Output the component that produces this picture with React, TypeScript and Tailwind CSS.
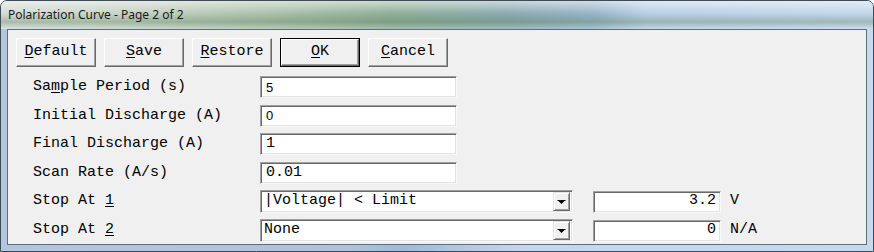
import React from 'react';

const mono = "font-['Liberation_Mono','Courier_New',monospace]";

function Btn({ label, hot, def }: { label: string; hot: number; def?: boolean }) {
  const face = (
    <div
      className={`${def ? 'w-[78px] h-[27px]' : 'w-[80px] h-[29px]'} flex items-center justify-center bg-[#f0f0f0] border-t border-l border-t-white border-l-white border-b border-r border-b-[#696969] border-r-[#696969] shadow-[inset_-1px_-1px_0_#a0a0a0] text-[15px] text-black ${mono}`}
    >
      <span>
        {label.slice(0, hot)}
        <span className="underline underline-offset-2">{label[hot]}</span>
        {label.slice(hot + 1)}
      </span>
    </div>
  );
  return def ? <div className="border border-black">{face}</div> : face;
}

function Sunken({ className, children }: { className: string; children?: React.ReactNode }) {
  return (
    <div
      className={`bg-white border-t border-l border-t-[#a0a0a0] border-l-[#a0a0a0] border-b border-r border-b-[#f8f8f8] border-r-[#f8f8f8] shadow-[inset_1px_1px_0_#696969,inset_-1px_-1px_0_#e3e3e3] flex items-center ${className}`}
    >
      {children}
    </div>
  );
}

function Combo({ value }: { value: React.ReactNode }) {
  return (
    <Sunken className="w-[313px] h-[23px] pl-[3px] pr-[2px]">
      <span className={`flex-1 text-[15px] ${mono}`}>{value}</span>
      <div className="w-[17px] h-[19px] flex items-center justify-center bg-[#f0f0f0] border-t border-l border-t-[#e3e3e3] border-l-[#e3e3e3] border-b border-r border-b-[#696969] border-r-[#696969] shadow-[inset_1px_1px_0_#fff,inset_-1px_-1px_0_#a0a0a0]">
        <svg width="9" height="6" viewBox="0 0 9 6">
          <path d="M1 1.5h7L4.5 5z" fill="#000" />
          <rect x="0.5" y="1" width="8" height="1" fill="#000" />
        </svg>
      </div>
    </Sunken>
  );
}

function Row({ label, children }: { label: React.ReactNode; children: React.ReactNode }) {
  return (
    <div className="flex items-center">
      <div className={`w-[227px] text-[15px] text-black ${mono}`}>{label}</div>
      {children}
    </div>
  );
}

export default function App() {
  const sans = "font-['Liberation_Sans',Arial,sans-serif] text-[13px]";
  return (
    <div className="w-[874px] h-[252px] flex flex-col overflow-hidden rounded-t-[7px] border border-[#3f4a57] bg-[linear-gradient(90deg,#b3c6dc_0%,#aec3db_40%,#9fbad6_46%,#c4d7ec_60%,#c6d9ed_100%)]">
      <div className="h-[28px] flex items-center pl-[7px] bg-[linear-gradient(180deg,rgba(255,255,255,0.55)_0%,rgba(255,255,255,0)_45%,rgba(90,130,90,0.35)_75%,rgba(255,255,255,0.2)_100%),linear-gradient(90deg,#d3dcd6_0%,#c5d2c4_15%,#a9bfa9_32%,#8fae97_45%,#8aaab0_58%,#96b5c9_68%,#b9cfe6_74%,#c3d6ec_100%)]">
        <span className="font-['Noto_Sans','Open_Sans',sans-serif] text-[12px] text-[#1a1a1a]">
          Polarization Curve - Page 2 of 2
        </span>
      </div>
      <div className="flex-1 mx-[6px] mb-[6px] border border-[#5e6e80] bg-[#f0f0f0] flex flex-col pt-[8px] pl-[8px]">
        <div className="flex gap-[8px]">
          <Btn label="Default" hot={0} />
          <Btn label="Save" hot={0} />
          <Btn label="Restore" hot={0} />
          <Btn label="OK" hot={0} def />
          <Btn label="Cancel" hot={0} />
        </div>
        <div className="flex flex-col gap-[6px] mt-[9px] pl-[17px]">
          <Row label={<>Sa<span className="underline underline-offset-2">m</span>ple Period (s)</>}>
            <Sunken className="w-[197px] h-[22px] pl-[5px]">
              <span className={sans}>5</span>
            </Sunken>
          </Row>
          <Row label="Initial Discharge (A)">
            <Sunken className="w-[197px] h-[22px] pl-[5px]">
              <span className={sans}>0</span>
            </Sunken>
          </Row>
          <Row label="Final Discharge (A)">
            <Sunken className="w-[197px] h-[22px] pl-[5px]">
              <span className={`text-[15px] ${mono}`}>1</span>
            </Sunken>
          </Row>
          <Row label="Scan Rate (A/s)">
            <Sunken className="w-[197px] h-[22px] pl-[5px]">
              <span className={`text-[15px] ${mono}`}>0.01</span>
            </Sunken>
          </Row>
          <Row label={<>Stop At <span className="underline underline-offset-2">1</span></>}>
            <Combo value="|Voltage| < Limit" />
            <Sunken className="w-[128px] h-[22px] ml-[20px] justify-end pr-[4px]">
              <span className={`text-[15px] ${mono}`}>3.2</span>
            </Sunken>
            <span className={`ml-[9px] text-[15px] ${mono}`}>V</span>
          </Row>
          <Row label={<>Stop At <span className="underline underline-offset-2">2</span></>}>
            <Combo value="None" />
            <Sunken className="w-[128px] h-[22px] ml-[20px] justify-end pr-[4px]">
              <span className={`text-[15px] ${mono}`}>0</span>
            </Sunken>
            <span className={`ml-[9px] text-[15px] ${mono}`}>N/A</span>
          </Row>
        </div>
      </div>
    </div>
  );
}
